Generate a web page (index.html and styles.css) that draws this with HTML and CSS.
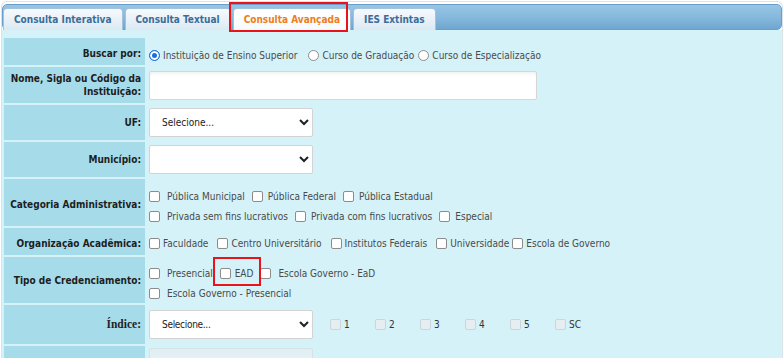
FILE: index.html
```html
<!DOCTYPE html>
<html lang="pt-BR">
<head>
    <meta charset="UTF-8">
    <meta name="viewport" content="width=device-width, initial-scale=1.0">
    <title>Consulta Avançada</title>
    <link rel="stylesheet" href="styles.css">
</head>
<body>
    <div class="panel">
        <ul class="tabs">
            <li class="tab">Consulta Interativa</li>
            <li class="tab">Consulta Textual</li>
            <li class="tab active">Consulta Avançada</li>
            <li class="tab">IES Extintas</li>
        </ul>

        <div class="content">
            <form class="form">
                <!-- Buscar por -->
                <div class="label row-buscar">Buscar por:</div>
                <div class="field row-buscar">
                    <label class="opt"><input type="radio" name="busca" checked><span>Instituição de Ensino Superior</span></label>
                    <label class="opt opt-tight"><input type="radio" name="busca"><span>Curso de Graduação</span></label>
                    <label class="opt"><input type="radio" name="busca"><span>Curso de Especialização</span></label>
                </div>

                <div class="label">Nome, Sigla ou Código da<br>Instituição:</div>
                <div class="field">
                    <input type="text" class="text-input">
                </div>

                <div class="label">UF:</div>
                <div class="field">
                    <select class="select">
                        <option>Selecione...</option>
                    </select>
                </div>

                <div class="label">Município:</div>
                <div class="field">
                    <select class="select">
                        <option></option>
                    </select>
                </div>

                <!-- Categoria Administrativa -->
                <div class="label row-cat">Categoria Administrativa:</div>
                <div class="field lines row-cat">
                    <div class="line">
                        <label class="opt"><input type="checkbox"><span>Pública Municipal</span></label>
                        <label class="opt narrow"><input type="checkbox"><span>Pública Federal</span></label>
                        <label class="opt narrow"><input type="checkbox"><span>Pública Estadual</span></label>
                    </div>
                    <div class="line">
                        <label class="opt"><input type="checkbox"><span>Privada sem fins lucrativos</span></label>
                        <label class="opt narrow"><input type="checkbox"><span>Privada com fins lucrativos</span></label>
                        <label class="opt narrow"><input type="checkbox"><span>Especial</span></label>
                    </div>
                </div>

                <div class="label row-org">Organização Acadêmica:</div>
                <div class="field row-org">
                    <label class="opt"><input type="checkbox"><span>Faculdade</span></label>
                    <label class="opt"><input type="checkbox"><span>Centro Universitário</span></label>
                    <label class="opt"><input type="checkbox"><span>Institutos Federais</span></label>
                    <label class="opt opt-tight"><input type="checkbox"><span>Universidade</span></label>
                    <label class="opt"><input type="checkbox"><span>Escola de Governo</span></label>
                </div>

                <!-- Tipo de Credenciamento -->
                <div class="label">Tipo de Credenciamento:</div>
                <div class="field lines row-tipo">
                    <div class="line">
                        <label class="opt"><input type="checkbox"><span>Presencial</span></label>
                        <label class="opt opt-ead"><input type="checkbox"><span>EAD</span></label>
                        <label class="opt"><input type="checkbox"><span>Escola Governo - EaD</span></label>
                    </div>
                    <div class="line">
                        <label class="opt"><input type="checkbox"><span>Escola Governo - Presencial</span></label>
                    </div>
                </div>

                <div class="label label-indice">Índice:</div>
                <div class="field">
                    <select class="select select-narrow">
                        <option>Selecione...</option>
                    </select>
                    <div class="indices">
                        <label class="idx"><input type="checkbox" disabled><span>1</span></label>
                        <label class="idx"><input type="checkbox" disabled><span>2</span></label>
                        <label class="idx"><input type="checkbox" disabled><span>3</span></label>
                        <label class="idx"><input type="checkbox" disabled><span>4</span></label>
                        <label class="idx"><input type="checkbox" disabled><span>5</span></label>
                        <label class="idx"><input type="checkbox" disabled><span>SC</span></label>
                    </div>
                </div>

                <div class="label"></div>
                <div class="field field-top">
                    <select class="select select-disabled" disabled>
                        <option></option>
                    </select>
                </div>
            </form>
        </div>
    </div>

    <!-- highlight boxes drawn over the screenshot -->
    <div class="mark mark-tab"></div>
    <div class="mark mark-ead"></div>
</body>
</html>
```

FILE: styles.css
```css
/* Consulta Avançada - layout */
html, body {
    margin: 0;
    padding: 0;
    overflow: hidden;
    background: #fff;
}
body {
    position: relative;
    width: 784px;
    height: 358px;
    font-family: "DejaVu Sans Condensed", "DejaVu Sans", sans-serif;
    font-stretch: condensed;
    font-size: 10px;
    color: #4a4a4a;
}
.panel {
    margin: 1px 1px 0;
    padding-top: 2px;
    border: 1px solid #d9e3e9;
    border-bottom: 0;
    border-radius: 6px 6px 0 0;
}

/* Tabs */
.tabs {
    list-style: none;
    margin: 0;
    padding: 1px 0 0;
    height: 23px;
    display: flex;
    align-items: flex-end;
    gap: 2px;
    background: linear-gradient(#97c5e4, #86b9dd 50%, #6fa6d0);
    border: 1px solid #6a9fcb;
    border-radius: 5px;
}
.tab {
    height: 22px;
    line-height: 21px;
    padding: 0 10px;
    border: 1px solid #a3c3dd;
    border-bottom: 0;
    border-radius: 4px 4px 0 0;
    background: linear-gradient(#f6fafd, #dce9f3);
    color: #3b6c99;
    font-weight: bold;
    box-sizing: border-box;
    margin-bottom: -1px;
}
.tab.active {
    background: linear-gradient(#fff, #f7fbfd);
    color: #ee7d1d;
}

/* Form area */
.content {
    background: #d5f2f9;
    padding: 8px 0 0 2px;
    height: 321px;
}
.form {
    display: grid;
    grid-template-columns: 141px 1fr;
    grid-template-rows: 27px 36px 35px 35px 47px 27px 46px 39px 13px;
    row-gap: 2px;
    column-gap: 3px;
    margin: 0;
}
.label {
    background: #a6dcea;
    color: #1e1e1e;
    font-weight: bold;
    text-align: right;
    line-height: 13px;
    padding-right: 4px;
    display: flex;
    align-items: center;
    justify-content: flex-end;
}
.field {
    display: flex;
    align-items: center;
    padding-left: 1px;
}
.row-buscar.label { padding-top: 3px; }
.row-buscar.field { padding-top: 8px; }
.row-cat.label { padding-top: 3px; }
.row-org { padding-top: 4px; }
.lines {
    flex-direction: column;
    align-items: flex-start;
}
.row-cat.lines { padding-top: 7px; }
.row-tipo.lines { padding-top: 6px; }
.line {
    height: 21px;
    display: flex;
    align-items: center;
}
.field-top {
    align-items: flex-start;
    padding-top: 2px;
    overflow: hidden;
}

/* Text inputs and selects */
.text-input {
    width: 388px;
    height: 29px;
    box-sizing: border-box;
    border: 1px solid #d6d6d6;
    border-radius: 2px;
    background: #fff;
    box-shadow: inset 0 4px 5px -3px rgba(0, 0, 0, 0.08);
    margin: 0;
}
.select {
    width: 164px;
    height: 29px;
    box-sizing: border-box;
    border: 1px solid #d3d3d3;
    border-radius: 2px;
    background: #fff;
    padding-left: 8px;
    font-family: inherit;
    font-stretch: condensed;
    font-size: 10px;
    color: #222;
    margin: 0;
    flex: none;
}
.select-narrow { letter-spacing: -0.3px; }
.select-disabled {
    background: linear-gradient(#e6edf0, #f2f6f7);
    border-color: #d6dde0;
}

/* Checkboxes and radios */
.opt {
    display: inline-flex;
    align-items: center;
    margin-right: 8px;
    white-space: nowrap;
}
.opt input {
    appearance: none;
    -webkit-appearance: none;
    width: 11px;
    height: 11px;
    margin: 0 7px 0 0;
    border: 1px solid #8c8c8c;
    border-radius: 2px;
    background: #fff;
    flex: none;
}
.opt input[type="radio"] {
    border-radius: 50%;
    margin-right: 3px;
}
.opt input[type="radio"]:checked {
    border-color: #1a6fe0;
    background: #1a6fe0;
    box-shadow: inset 0 0 0 2px #fff;
}
.row-buscar .opt { margin-right: 11px; }
.row-buscar .opt-tight { margin-right: 4px; }
.row-cat .opt { margin-right: 7px; }
.row-cat .narrow input { margin-right: 5px; }
.row-org .opt { margin-right: 9px; }
.row-org .opt input { margin-right: 3px; }
.row-org .opt-tight { margin-right: 3px; }
.row-tipo .opt { margin-right: 7px; }
.row-tipo .opt-ead input { margin-right: 4px; }

.indices {
    display: flex;
    margin-left: 17px;
}
.idx {
    width: 45px;
    display: flex;
    align-items: center;
    color: #333;
}
.idx input {
    appearance: none;
    -webkit-appearance: none;
    width: 11px;
    height: 11px;
    margin: 0 3px 0 0;
    border: 1px solid #c9d6db;
    border-radius: 2px;
    background: #e6eef1;
}
.label-indice {
    font-family: "Liberation Serif", serif;
    font-size: 11.5px;
    color: #222;
}

/* red highlight rectangles */
.mark {
    position: absolute;
    border: 2px solid #e8141a;
    box-sizing: border-box;
}
.mark-tab {
    left: 229px;
    top: 2px;
    width: 119px;
    height: 30px;
}
.mark-ead {
    left: 213px;
    top: 257px;
    width: 48px;
    height: 29px;
}
```
